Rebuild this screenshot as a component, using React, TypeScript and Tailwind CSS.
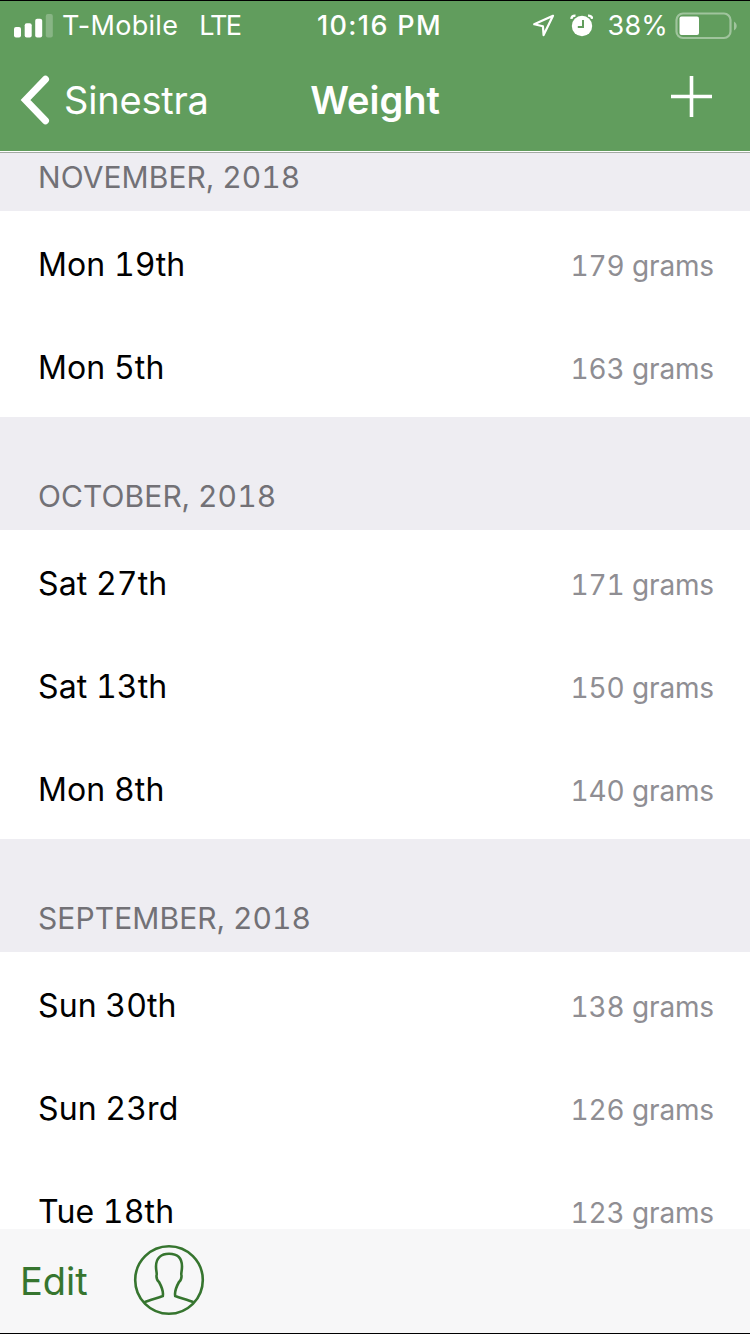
import React from 'react';

interface Entry {
  day: string;
  grams: number;
}

interface Month {
  title: string;
  entries: Entry[];
}

const months: Month[] = [
  {
    title: 'November, 2018',
    entries: [
      { day: 'Mon 19th', grams: 179 },
      { day: 'Mon 5th', grams: 163 },
    ],
  },
  {
    title: 'October, 2018',
    entries: [
      { day: 'Sat 27th', grams: 171 },
      { day: 'Sat 13th', grams: 150 },
      { day: 'Mon 8th', grams: 140 },
    ],
  },
  {
    title: 'September, 2018',
    entries: [
      { day: 'Sun 30th', grams: 138 },
      { day: 'Sun 23rd', grams: 126 },
      { day: 'Tue 18th', grams: 123 },
    ],
  },
];

function StatusBar() {
  return (
    <div className="grid h-[49px] grid-cols-[1fr_auto_1fr] items-center text-[27px] leading-none">
      <div className="flex items-center pl-[14px]">
        <svg width="39" height="24" viewBox="0 0 39 24" fill="currentColor">
          <rect x="0" y="13" width="7" height="10.5" rx="2" />
          <rect x="10.7" y="9.2" width="7" height="14.3" rx="2" />
          <rect x="21.2" y="4.7" width="7" height="18.8" rx="2" />
          <rect x="31.8" y="0" width="7" height="23.5" rx="2" opacity="0.25" />
        </svg>
        <span className="ml-[9px] tracking-[0.3px]">T-Mobile</span>
        <span className="ml-[21px] tracking-[-1.8px]">LTE</span>
      </div>
      <span className="pl-[9px] text-[27px] font-medium tracking-[1.35px]">10:16 PM</span>
      <div className="flex items-center justify-end pr-[12px]">
        <svg width="23" height="23" viewBox="0 0 23 23" fill="none" stroke="currentColor" strokeWidth="2.2" strokeLinejoin="round">
          <path d="M21 1.8 2.2 10.2l8.7 2 .7 8.9Z" />
        </svg>
        <svg className="ml-[14px]" width="24" height="24" viewBox="0 0 24 24">
          <circle cx="13" cy="12" r="10.2" fill="currentColor" />
          <path d="M2.3 4.8c.2-1.9 1.8-3.3 4.2-3.2M23.2 4.8c-.2-1.9-1.8-3.3-4.2-3.2" fill="none" stroke="currentColor" strokeWidth="2.4" />
          <path d="M14 6v7H8.8" fill="none" stroke="#619d5d" strokeWidth="2" />
        </svg>
        <span className="ml-[15px] tracking-[0.2px]">38%</span>
        <svg className="ml-[7px]" width="63" height="28" viewBox="0 0 63 28">
          <rect x="1.5" y="1.5" width="54" height="24.5" rx="6.5" fill="none" stroke="currentColor" strokeWidth="2.2" opacity="0.4" />
          <path d="M59 9.5c3.6 2 3.6 7 0 9Z" fill="currentColor" opacity="0.4" />
          <rect x="4.5" y="4.5" width="19.5" height="18.5" rx="2" fill="currentColor" />
        </svg>
      </div>
    </div>
  );
}

function NavBar() {
  return (
    <div className="grid h-[101px] grid-cols-[1fr_auto_1fr] items-center">
      <button className="flex items-center pb-[2px] pl-[20px]">
        <svg width="30" height="50" viewBox="0 0 30 50" fill="none" stroke="currentColor" strokeWidth="7" strokeLinecap="round" strokeLinejoin="miter">
          <path d="M25.5 4.2 5.5 25l20 20.8" />
        </svg>
        <span className="ml-[14px] text-[38px] leading-none tracking-[-0.2px]">Sinestra</span>
      </button>
      <h1 className="pb-[2px] text-[38px] leading-none font-semibold">Weight</h1>
      <button className="flex justify-end pr-[38px]">
        <svg className="mb-[8px]" width="41" height="41" viewBox="0 0 41 41" fill="none" stroke="currentColor" strokeWidth="3.6">
          <path d="M20.5 0v41M0 20.5h41" />
        </svg>
      </button>
    </div>
  );
}

function MonthSection({ title, entries }: Month) {
  return (
    <section>
      <h2 className="flex h-[113px] items-end bg-[#eeedf2] pb-[19px] pl-[38px] text-[30px] leading-[30px] uppercase tracking-[0.08px] tabular-nums text-[#727176]">
        {title}
      </h2>
      <ul>
        {entries.map((entry) => (
          <li key={entry.day} className="flex h-[103px] items-center justify-between pr-[36px] pl-[38px] tabular-nums">
            <span className="pt-[4px] text-[32px] leading-none tracking-[0.1px] text-black">{entry.day}</span>
            <span className="pt-[7px] text-[28px] leading-none tracking-[-0.15px] text-[#8f8e93]">{entry.grams} grams</span>
          </li>
        ))}
      </ul>
    </section>
  );
}

function Toolbar() {
  return (
    <footer className="flex h-[105px] shrink-0 items-center border-b border-black bg-[#f7f7f8] pl-[20px] text-[#36752f]">
      <button className="text-[38px] leading-none">Edit</button>
      <button className="mb-[2px] ml-[45px]">
        <svg width="72" height="72" viewBox="0 0 72 72" fill="none" stroke="currentColor" strokeWidth="2.6">
          <circle cx="36" cy="36" r="33.8" />
          <path d="M11.5 58.3c5.5-2.5 12.500-4 18.300-6.300 1-5.500-1.300-9.500-3.800-14-1.500-1.200-2.700-3.500-2.500-6.500.8-1.500-.5-4.500-.5-9C23 13.700 28.300 9.800 36 9.800s13 3.900 13 12.700c0 4.500-1.300 7.500-.5 9 .2 3-1 5.300-2.500 6.500-2.500 4.500-4.800 8.500-3.800 14 5.800 2.300 12.800 3.800 18.300 6.300" />
        </svg>
      </button>
    </footer>
  );
}

export default function App() {
  return (
    <div className="flex h-[1334px] w-[750px] flex-col overflow-hidden bg-white font-['Inter','Liberation_Sans',sans-serif]">
      <header className="h-[153px] shrink-0 border-t border-black bg-[#619d5d] text-white">
        <StatusBar />
        <NavBar />
        <div className="h-px bg-white" />
        <div className="h-px bg-[#a3aaa3]" />
      </header>
      {/* scrolled so the first month header is partly under the nav bar */}
      <main className="flex min-h-0 flex-1 flex-col justify-start overflow-hidden">
        <div className="-mt-[55px]">
          {months.map((month) => (
            <MonthSection key={month.title} {...month} />
          ))}
        </div>
      </main>
      <Toolbar />
    </div>
  );
}
